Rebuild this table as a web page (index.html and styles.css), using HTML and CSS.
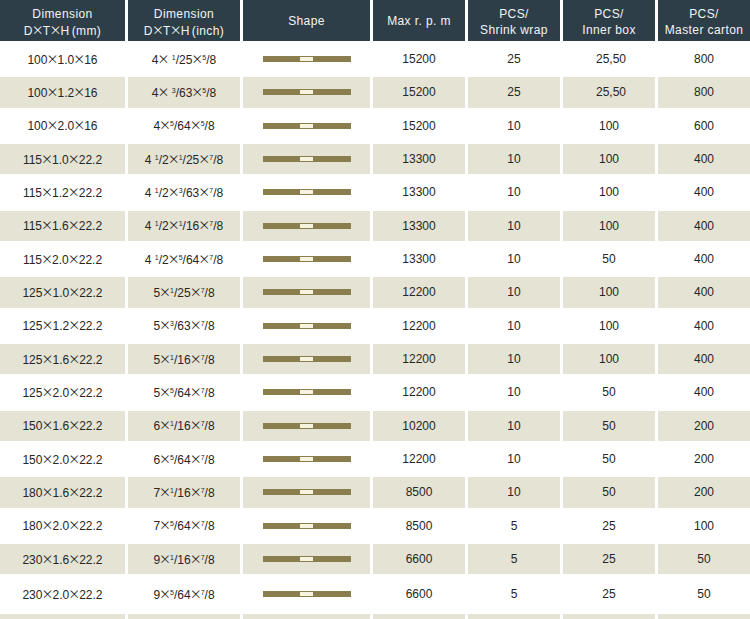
FILE: index.html
```html
<!DOCTYPE html>
<html>
<head>
<meta charset="utf-8">
<link rel="stylesheet" href="styles.css">
</head>
<body>
<div class="wrap">
<table class="spec">
<colgroup>
<col class="c1"><col class="c2"><col class="c3"><col class="c4"><col class="c5"><col class="c6"><col class="c7">
</colgroup>
<thead>
<tr>
<th class="two">Dimension<br>D<span class="x">×</span>T<span class="x">×</span>H<span class="p">(mm)</span></th>
<th class="two">Dimension<br>D<span class="x">×</span>T<span class="x">×</span>H<span class="p">(inch)</span></th>
<th>Shape</th>
<th>Max r. p. m</th>
<th class="two">PCS/<br>Shrink wrap</th>
<th class="two">PCS/<br>Inner box</th>
<th class="two">PCS/<br>Master carton</th>
</tr>
</thead>
<tbody>
<tr><td>100<span class="x">×</span>1.0<span class="x">×</span>16</td><td>4<span class="x">×</span> <sup>1</sup>/25<span class="x">×</span><sup>5</sup>/8</td><td><div class="bar"></div></td><td>15200</td><td>25</td><td class="r">25,50</td><td>800</td></tr>
<tr class="alt"><td>100<span class="x">×</span>1.2<span class="x">×</span>16</td><td>4<span class="x">×</span> <sup>3</sup>/63<span class="x">×</span><sup>5</sup>/8</td><td><div class="bar"></div></td><td>15200</td><td>25</td><td class="r">25,50</td><td>800</td></tr>
<tr><td>100<span class="x">×</span>2.0<span class="x">×</span>16</td><td>4<span class="x">×</span><sup>5</sup>/64<span class="x">×</span><sup>5</sup>/8</td><td><div class="bar"></div></td><td>15200</td><td>10</td><td>100</td><td>600</td></tr>
<tr class="alt"><td>115<span class="x">×</span>1.0<span class="x">×</span>22.2</td><td>4 <sup>1</sup>/2<span class="x">×</span><sup>1</sup>/25<span class="x">×</span><sup>7</sup>/8</td><td><div class="bar"></div></td><td>13300</td><td>10</td><td>100</td><td>400</td></tr>
<tr><td>115<span class="x">×</span>1.2<span class="x">×</span>22.2</td><td>4 <sup>1</sup>/2<span class="x">×</span><sup>3</sup>/63<span class="x">×</span><sup>7</sup>/8</td><td><div class="bar"></div></td><td>13300</td><td>10</td><td>100</td><td>400</td></tr>
<tr class="alt"><td>115<span class="x">×</span>1.6<span class="x">×</span>22.2</td><td>4 <sup>1</sup>/2<span class="x">×</span><sup>1</sup>/16<span class="x">×</span><sup>7</sup>/8</td><td><div class="bar"></div></td><td>13300</td><td>10</td><td>100</td><td>400</td></tr>
<tr><td>115<span class="x">×</span>2.0<span class="x">×</span>22.2</td><td>4 <sup>1</sup>/2<span class="x">×</span><sup>5</sup>/64<span class="x">×</span><sup>7</sup>/8</td><td><div class="bar"></div></td><td>13300</td><td>10</td><td>50</td><td>400</td></tr>
<tr class="alt"><td>125<span class="x">×</span>1.0<span class="x">×</span>22.2</td><td>5<span class="x">×</span><sup>1</sup>/25<span class="x">×</span><sup>7</sup>/8</td><td><div class="bar"></div></td><td>12200</td><td>10</td><td>100</td><td>400</td></tr>
<tr><td>125<span class="x">×</span>1.2<span class="x">×</span>22.2</td><td>5<span class="x">×</span><sup>3</sup>/63<span class="x">×</span><sup>7</sup>/8</td><td><div class="bar"></div></td><td>12200</td><td>10</td><td>100</td><td>400</td></tr>
<tr class="alt"><td>125<span class="x">×</span>1.6<span class="x">×</span>22.2</td><td>5<span class="x">×</span><sup>1</sup>/16<span class="x">×</span><sup>7</sup>/8</td><td><div class="bar"></div></td><td>12200</td><td>10</td><td>100</td><td>400</td></tr>
<tr><td>125<span class="x">×</span>2.0<span class="x">×</span>22.2</td><td>5<span class="x">×</span><sup>5</sup>/64<span class="x">×</span><sup>7</sup>/8</td><td><div class="bar"></div></td><td>12200</td><td>10</td><td>50</td><td>400</td></tr>
<tr class="alt"><td>150<span class="x">×</span>1.6<span class="x">×</span>22.2</td><td>6<span class="x">×</span><sup>1</sup>/16<span class="x">×</span><sup>7</sup>/8</td><td><div class="bar"></div></td><td>10200</td><td>10</td><td>50</td><td>200</td></tr>
<tr><td>150<span class="x">×</span>2.0<span class="x">×</span>22.2</td><td>6<span class="x">×</span><sup>5</sup>/64<span class="x">×</span><sup>7</sup>/8</td><td><div class="bar"></div></td><td>12200</td><td>10</td><td>50</td><td>200</td></tr>
<tr class="alt"><td>180<span class="x">×</span>1.6<span class="x">×</span>22.2</td><td>7<span class="x">×</span><sup>1</sup>/16<span class="x">×</span><sup>7</sup>/8</td><td><div class="bar"></div></td><td>8500</td><td>10</td><td>50</td><td>200</td></tr>
<tr><td>180<span class="x">×</span>2.0<span class="x">×</span>22.2</td><td>7<span class="x">×</span><sup>5</sup>/64<span class="x">×</span><sup>7</sup>/8</td><td><div class="bar"></div></td><td>8500</td><td>5</td><td>25</td><td>100</td></tr>
<tr class="alt"><td>230<span class="x">×</span>1.6<span class="x">×</span>22.2</td><td>9<span class="x">×</span><sup>1</sup>/16<span class="x">×</span><sup>7</sup>/8</td><td><div class="bar"></div></td><td>6600</td><td>5</td><td>25</td><td>50</td></tr>
<tr class="last"><td>230<span class="x">×</span>2.0<span class="x">×</span>22.2</td><td>9<span class="x">×</span><sup>5</sup>/64<span class="x">×</span><sup>7</sup>/8</td><td><div class="bar"></div></td><td>6600</td><td>5</td><td>25</td><td>50</td></tr>
<tr class="alt foot"><td></td><td></td><td></td><td></td><td></td><td></td><td></td></tr>
</tbody>
</table>
</div>
</body>
</html>
```

FILE: styles.css
```css
html, body {
  margin: 0;
  padding: 0;
  background: #ffffff;
  overflow: hidden;
}

.wrap {
  width: 750px;
  height: 619px;
  overflow: hidden;
}

.spec {
  border-collapse: separate;
  border-spacing: 3px;
  margin: -3px 0 0 -3px;
  table-layout: fixed;
  width: 756px;
  font-family: "Liberation Sans", Arial, sans-serif;
  font-size: 12px;
  color: #262626;
}

.c1 { width: 125px; }
.c2 { width: 112px; }
.c3 { width: 127px; }
.c4 { width: 92px; }
.c5 { width: 92px; }
.c6 { width: 92px; }
.c7 { width: 92px; }

.spec th {
  background: #2e3e48;
  color: #f2f4f4;
  font-weight: normal;
  height: 41px;
  padding: 0;
  line-height: 16px;
  text-align: center;
  vertical-align: middle;
  letter-spacing: 0.4px;
}

.spec th.two {
  padding-top: 3px;
  height: 38px;
}

.spec td {
  height: 30.33px;
  padding: 0;
  text-align: center;
  vertical-align: middle;
  line-height: 14px;
  white-space: nowrap;
}

.spec tr.alt td {
  background: #e5e3d4;
}

.spec tr.last td {
  height: 34px;
}

.spec tr.foot td {
  height: 10px;
}

.spec td.r {
  padding-left: 4px;
}

.x {
  font-family: "Noto Sans CJK JP", "Liberation Sans", sans-serif;
  letter-spacing: 0;
  margin: 0 -1px;
}

.p {
  margin-left: 2px;
}

.spec sup {
  font-size: 7px;
  line-height: 0;
  vertical-align: 4px;
}

.bar {
  position: relative;
  width: 88px;
  height: 6px;
  margin: 0 auto;
  background: #8b7e4e;
}

.bar::after {
  content: "";
  position: absolute;
  left: 37px;
  top: 1px;
  width: 13px;
  height: 4px;
  background: #f6f3e0;
}
```
